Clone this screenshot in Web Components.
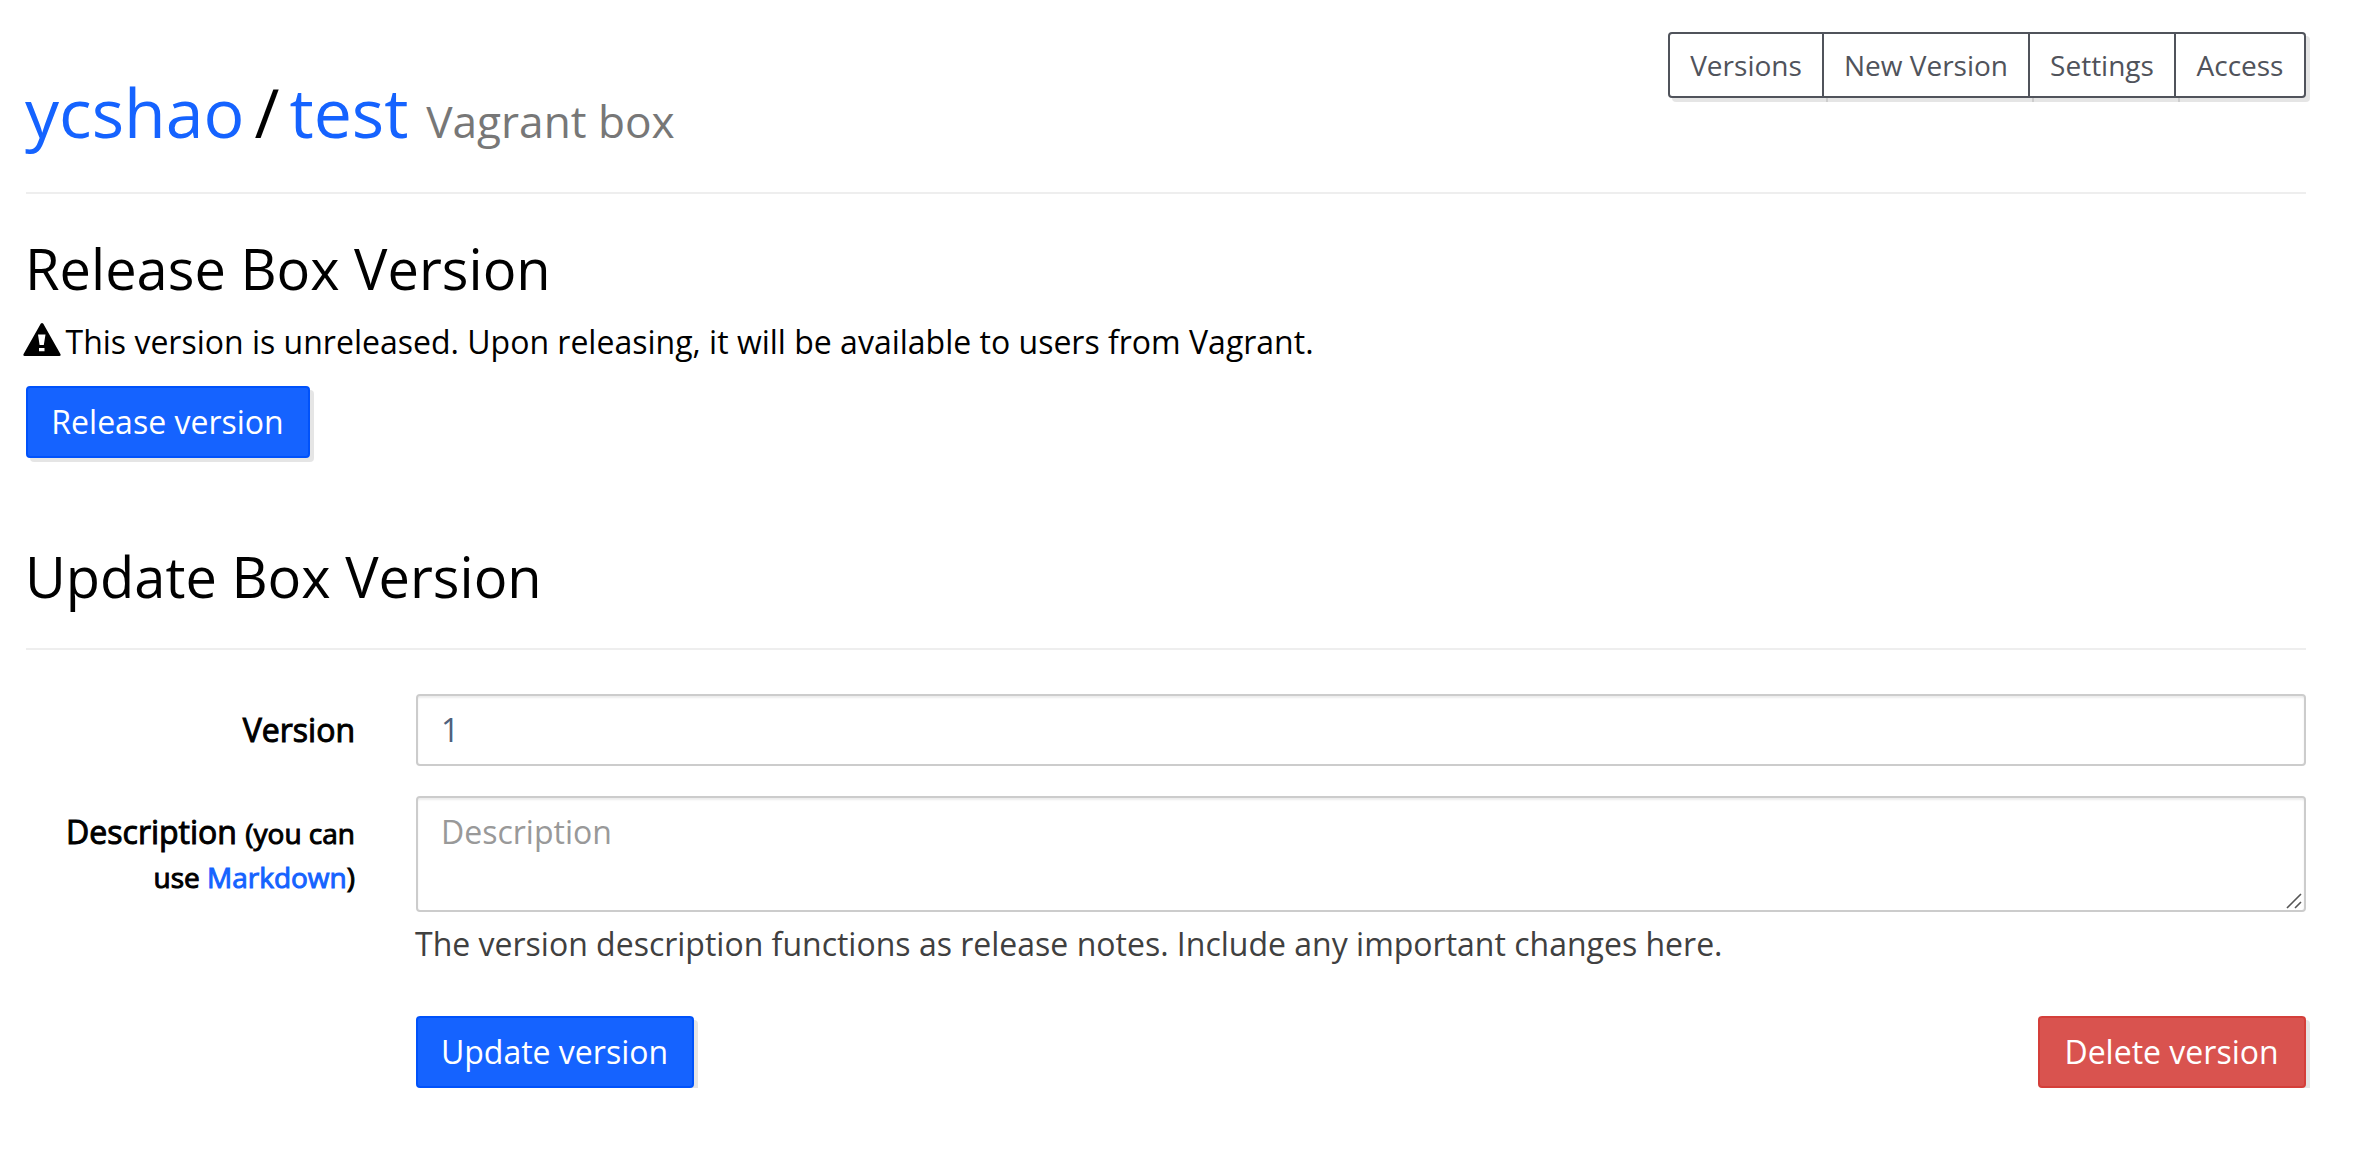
<!DOCTYPE html>
<html lang="en">
<head>
<meta charset="utf-8">
<title>ycshao/test - Vagrant box</title>
<style>
body{margin:0;background:#fff;color:#000;font:32px/44px "Open Sans",sans-serif}
</style>
</head>
<body>
<box-page></box-page>
<script>
const define = (name, html) => customElements.define(name, class extends HTMLElement {
  constructor() {
    super();
    const t = document.createElement('template');
    t.innerHTML = html;
    this.attachShadow({mode: 'open'}).append(t.content.cloneNode(true));
  }
});

define('box-link', `<style>:host{display:inline}a{color:#1563ff;text-decoration:none}</style><a href="#"><slot></slot></a>`);

define('box-button', `<style>
:host{display:block;--bg:#1563ff;--line:#0052fb}
:host([kind=danger]){--bg:#d9534f;--line:#d43f3a}
button{display:block;box-sizing:border-box;width:100%;height:72px;padding:0 1px 0 0;border:2px solid var(--line);border-radius:4px;background:var(--bg);color:#fff;font:inherit;line-height:44px;text-align:center;box-shadow:4px 4px 0 rgba(0,0,0,.1)}
</style><button type="button"><slot></slot></button>`);

define('nav-item', `<style>
:host{display:block;box-sizing:border-box;height:66px;border:2px solid #50535b;background:#fff;box-shadow:4px 4px 0 rgba(0,0,0,.1);font-size:28px;line-height:62px;text-align:center}
a{color:#50535b;text-decoration:none}
</style><a href="#"><slot></slot></a>`);

define('nav-group', `<style>
:host{display:flex}
::slotted(*){margin-left:-2px}
::slotted(:first-child){margin-left:0;border-radius:4px 0 0 4px}
::slotted(:last-child){border-radius:0 4px 4px 0}
</style><slot></slot>`);

define('page-header', `<style>
:host{display:flex;justify-content:space-between;align-items:flex-start;box-sizing:border-box;height:194px;padding-top:32px;border-bottom:2px solid #eee}
h1{margin:42px 0 0 -1px;font-size:68px;line-height:76px;font-weight:400;white-space:nowrap}
.sep{margin:0 10px}
small{font-size:44.2px;line-height:1;color:#777}
</style><h1><box-link>ycshao</box-link><span class="sep">/</span><box-link>test</box-link> <small>Vagrant box</small></h1><slot name="nav"></slot>`);

define('section-title', `<style>
:host{display:block}h2{margin:0 0 0 -1px;font-size:56px;line-height:62px;font-weight:400}
</style><h2><slot></slot></h2>`);

define('warn-icon', `<style>:host{display:block;width:38px;height:34px}svg{display:block}</style>
<svg width="38" height="34" viewBox="0 0 38 34"><path fill="#000" fill-rule="evenodd" d="M17.7.8Q19 -.6 20.3.8L37.4 31Q38.200 33 36.300 33H1.700Q-.2 33 .6 31ZM15 11.500L16.600 22H20.800L22.500 11.500ZM16 25V28.300H21.500V25Z"/></svg>`);

define('release-notice', `<style>
:host{display:flex;align-items:flex-start;gap:5px;margin-left:-3.5px;white-space:nowrap}
warn-icon{margin-top:3px}
</style><warn-icon></warn-icon><span><slot></slot></span>`);

define('form-row', `<style>
:host{display:flex;gap:61px}
.label{box-sizing:border-box;width:329px;padding-top:14px;text-align:right;-webkit-text-stroke:1px currentColor;white-space:nowrap}
.field{flex:1}
</style><div class="label"><slot name="label"></slot></div><div class="field"><slot></slot></div>`);

define('text-field', `<style>
:host{display:block;box-sizing:border-box;height:72px;padding:12px 23px;border:2px solid #ccc;border-radius:4px;background:#fff;box-shadow:inset 0 2px 2px rgba(0,0,0,.075);color:#4f617c}
:host([multiline]){position:relative;height:116px;color:#999}
svg{display:none;position:absolute;right:2px;bottom:1px}
:host([multiline]) svg{display:block}
</style><slot></slot><svg width="16" height="16" viewBox="0 0 16 16"><path d="M1 15L15 1M9 15L15 9" stroke="#555" stroke-width="1.6"/></svg>`);

define('box-page', `<style>
:host{display:block;padding:0 56px 0 26px}
.n1{width:156px}.n2{width:208px}.n3{width:148px}.n4{width:132px}
.t1{margin-top:43px}
release-notice{margin-top:21px}
.release{width:284px;margin-top:22px}
.t2{margin-top:87px;padding-bottom:41px;border-bottom:2px solid #eee}
.r1{margin-top:44px}.r2{margin-top:30px}
small{font-size:28px;line-height:1}
.help{margin:10px 0 0 -1px;color:#404040}
.actions{display:flex;justify-content:space-between;margin:50px 0 0 390px}
.update{width:278px}.delete{width:268px}
</style>
<page-header><nav-group slot="nav"><nav-item class="n1">Versions</nav-item><nav-item class="n2">New Version</nav-item><nav-item class="n3">Settings</nav-item><nav-item class="n4">Access</nav-item></nav-group></page-header>
<section-title class="t1">Release Box Version</section-title>
<release-notice>This version is unreleased. Upon releasing, it will be available to users from Vagrant.</release-notice>
<box-button class="release">Release version</box-button>
<section-title class="t2">Update Box Version</section-title>
<form-row class="r1"><span slot="label">Version</span><text-field>1</text-field></form-row>
<form-row class="r2"><span slot="label">Description <small>(you can<br>use <box-link>Markdown</box-link>)</small></span><text-field multiline>Description</text-field><div class="help">The version description functions as release notes. Include any important changes here.</div></form-row>
<div class="actions"><box-button class="update">Update version</box-button><box-button class="delete" kind="danger">Delete version</box-button></div>`);
</script>
</body>
</html>
